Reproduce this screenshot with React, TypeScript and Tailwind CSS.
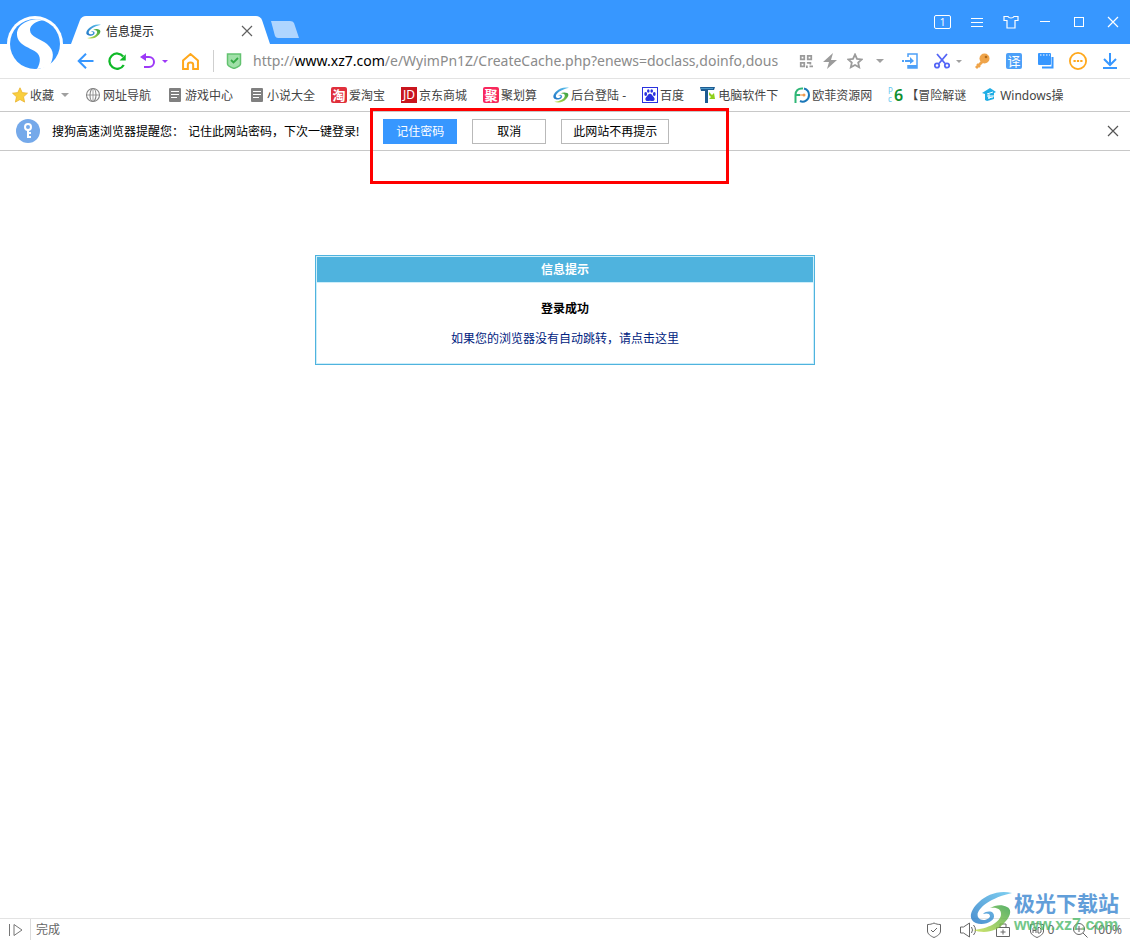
import type { ReactNode, SVGProps } from 'react'

function Svg({ children, ...rest }: SVGProps<SVGSVGElement>) {
  return (
    <svg width="16" height="16" viewBox="0 0 16 16" fill="none" aria-hidden="true" className="shrink-0" {...rest}>
      {children}
    </svg>
  )
}

function Swirl({ size = 16 }: { size?: number }) {
  return (
    <svg width={size} height={size} viewBox="0 0 42 42" aria-hidden="true" className="shrink-0">
      <defs>
        <linearGradient id="swirlBlue" x1="1" y1="0" x2="0" y2="1">
          <stop offset="0" stopColor="#5fc4ee" />
          <stop offset="1" stopColor="#1f74c4" />
        </linearGradient>
        <linearGradient id="swirlGreen" x1="1" y1="0" x2="0" y2="1">
          <stop offset="0" stopColor="#2e9e44" />
          <stop offset="1" stopColor="#c9e04a" />
        </linearGradient>
      </defs>
      <path
        fill="url(#swirlBlue)"
        d="M42 2C28-1 17 4 9 11 2 17-1 25 2 29c3 5 14 5 19 1 3-2 4-5 2-8-2-2-7-2-10 1 3-1 7-1 7 2 0 4-10 6-12 1C5 19 19 7 42 2Z"
      />
      <path
        fill="url(#swirlGreen)"
        d="M3 39c11 4 24 2 32-8 6-6 7-13 2-15-5-3-12-2-17 1 7-1 11 1 11 6 0 8-13 15-28 16Z"
      />
    </svg>
  )
}

function SogouLogo() {
  return (
    <svg width="56" height="56" viewBox="0 0 56 56" aria-hidden="true">
      <circle cx="28" cy="28" r="28" fill="#fff" />
      <circle cx="28" cy="28" r="25" fill="#3797ff" />
      <path
        fill="#fff"
        d="M37 4C24 1 10 8 10 18c0 11 12 13 19 18 5 4 5 10 1 17l12-2c5-9 6-16-2-23-6-5-17-7-17-14 0-5 6-9 14-10Z"
      />
    </svg>
  )
}

const CloseIcon = ({ color = '#fff' }: { color?: string }) => (
  <Svg stroke={color} strokeWidth="1.2">
    <path d="m3 3 10 10M13 3 3 13" />
  </Svg>
)

const Caret = ({ color = '#a0a0a0' }: { color?: string }) => (
  <svg width="8" height="4" viewBox="0 0 8 4" aria-hidden="true" className="shrink-0">
    <path d="M0 0h8L4 4Z" fill={color} />
  </svg>
)

const SmallCaret = ({ color }: { color: string }) => (
  <svg width="6" height="3" viewBox="0 0 6 3" aria-hidden="true" className="shrink-0">
    <path d="M0 0h6L3 3Z" fill={color} />
  </svg>
)

const icons: Record<string, ReactNode> = {
  star: (
    <Svg>
      <path d="m8 .8 2.2 4.8 5.3.6-4 3.6 1.1 5.3L8 12.5l-4.6 2.6 1.1-5.3-4-3.6 5.3-.6Z" fill="#f9cf3e" stroke="#eab22f" strokeWidth=".8" />
    </Svg>
  ),
  globe: (
    <Svg stroke="#858585" strokeWidth="1.1">
      <circle cx="8" cy="8" r="6.5" />
      <ellipse cx="8" cy="8" rx="3" ry="6.5" />
      <path d="M8 1.5v13M1.5 8h13" strokeWidth=".8" />
    </Svg>
  ),
  doc: (
    <Svg>
      <rect x="2" y="1" width="12" height="14" rx="1" fill="#808080" />
      <path d="M4 4.5h8M4 7.5h8M4 10.5h6" stroke="#fff" />
    </Svg>
  ),
  tao: <span className="flex size-4 shrink-0 items-center justify-center rounded-xs bg-[#e0303c] text-[13px] leading-4 font-bold text-white">淘</span>,
  jd: <span className="flex size-4 shrink-0 items-center justify-center bg-[#c9151e] text-[12px] leading-4 text-white">JD</span>,
  ju: <span className="flex size-4 shrink-0 items-center justify-center rounded-xs bg-[#f8285c] text-[13px] leading-4 font-bold text-white">聚</span>,
  swirl: <Swirl />,
  baidu: (
    <Svg>
      <rect x=".5" y=".5" width="15" height="15" fill="#fff" stroke="#2a32df" />
      <g fill="#2a32df">
        <ellipse cx="3.7" cy="7" rx="1.4" ry="1.9" />
        <ellipse cx="6.3" cy="4" rx="1.3" ry="1.8" />
        <ellipse cx="9.7" cy="4" rx="1.3" ry="1.8" />
        <ellipse cx="12.3" cy="7" rx="1.4" ry="1.9" />
        <path d="M8 6.8c2 0 2.3 2 3.7 3.2 1.8 1.8.8 4-1.2 4-1 0-1.500-.3-2.500-.3s-1.500.3-2.500.3c-2 0-3-2.200-1.200-4C5.700 8.800 6 6.800 8 6.800Z" />
      </g>
    </Svg>
  ),
  soft: (
    <Svg>
      <path d="M0 0h15l-1 3H8v13H5V4H1Z" fill="#1d5c92" />
      <path d="M1 1h12v1H1z" fill="#4a9aca" />
      <path d="m9 5 3 3 2-2 1 6H9l2-2-2-2Z" fill="#8fd01c" />
    </Svg>
  ),
  oufei: (
    <Svg strokeWidth="2">
      <path d="M9 1.5C4 1 1.500 4 1.500 8v8M2 8h4" stroke="#30b777" />
      <path d="M10 1.500c3 .8 5 3.500 5 6.500 0 5-5 8-9 6" stroke="#1976b8" />
      <path d="M6 8h4" stroke="#f19a4e" strokeWidth="1.2" />
      <circle cx="10" cy="8" r="1.500" fill="#f19a4e" />
    </Svg>
  ),
  pc6: (
    <Svg>
      <text x="0" y="7" fontSize="8" fill="#68c8ef">P</text>
      <text x="0" y="15" fontSize="8" fill="#68c8ef">c</text>
      <text x="6" y="14" fontSize="16" fontWeight="600" fill="#108f30">6</text>
    </Svg>
  ),
  win: (
    <Svg>
      <path d="M0 6 8 1l6 4-2 1v6l-7 2-2-1V7Z" fill="#20aee5" />
      <path d="m5 7 6-2M5 9h7M6 11l5-1M7 7v5" stroke="#fff" />
    </Svg>
  ),
}

const bookmarks = [
  { icon: 'globe', label: '网址导航' },
  { icon: 'doc', label: '游戏中心' },
  { icon: 'doc', label: '小说大全' },
  { icon: 'tao', label: '爱淘宝' },
  { icon: 'jd', label: '京东商城' },
  { icon: 'ju', label: '聚划算' },
  { icon: 'swirl', label: '后台登陆 -' },
  { icon: 'baidu', label: '百度' },
  { icon: 'soft', label: '电脑软件下' },
  { icon: 'oufei', label: '欧菲资源网' },
  { icon: 'pc6', label: '【冒险解谜' },
  { icon: 'win', label: 'Windows操' },
]

function TitleBar() {
  return (
    <header className="flex h-11 items-end bg-[#3797ff] pl-[71px]">
      <div className="relative flex h-7 w-[199px] items-center px-[15px] pt-0.5">
        <svg viewBox="0 0 199 28" preserveAspectRatio="none" aria-hidden="true" className="absolute inset-0 size-full">
          <path d="M0 28 9 4q2-4 6-4h170q4 0 6 4l8 24Z" fill="#fff" />
        </svg>
        <div className="relative flex w-full items-center">
          <Swirl size={15} />
          <span className="ml-[5px] flex-1 pt-0.5 text-xs text-[#222]">信息提示</span>
          <button aria-label="关闭标签页"><CloseIcon color="#606060" /></button>
        </div>
      </div>
      <button aria-label="新标签页" className="mb-[5px] h-[18px]">
        <svg width="30" height="18" viewBox="0 0 30 18" aria-hidden="true">
          <path d="M1 0h19q3 0 4 2l5 15H8q-2 0-3-2Z" fill="#afd5ff" />
        </svg>
      </button>
      <div className="mr-[9px] ml-auto flex h-11 items-center gap-[18px] text-white">
        <button aria-label="标签数" className="h-[14px] w-[17px] rounded-xs border border-white text-[10px] leading-3">1</button>
        <button aria-label="菜单"><Svg stroke="#fff"><path d="M2 4.5h12M2 8.5h12M2 12.5h12" /></Svg></button>
        <button aria-label="皮肤">
          <Svg stroke="#fff" strokeWidth="1.2">
            <path d="M1 2.5h4c1 2 5 2 6 0h4v4h-3V14H4V6.5H1Z" />
          </Svg>
        </button>
        <button aria-label="最小化"><Svg stroke="#fff"><path d="M3 7.5h10" /></Svg></button>
        <button aria-label="最大化"><Svg stroke="#fff"><rect x="3.5" y="3.5" width="9" height="9" /></Svg></button>
        <button aria-label="关闭"><CloseIcon /></button>
      </div>
    </header>
  )
}

function Toolbar() {
  return (
    <div className="flex h-[35px] items-center border-b border-[#e3e3e3] pr-3 pl-[77px]">
      <div className="flex items-center gap-[14px]">
        <button aria-label="后退">
          <Svg width="17" stroke="#3797ff" strokeWidth="2"><path d="M16 8H1M8.5.8 1.2 8l7.3 7.2" /></Svg>
        </button>
        <button aria-label="刷新">
          <Svg width="18" height="18" stroke="#0fb927" strokeWidth="2">
            <path d="M14 11.5A6.8 6.8 0 1 1 13.5 4" />
            <path d="M15.8 2v5.5h-5.5Z" fill="#0fb927" stroke="none" />
          </Svg>
        </button>
        <button aria-label="撤销" className="flex items-center gap-1.5">
          <Svg stroke="#9d39f7" strokeWidth="2">
            <path d="M3 4h6a5 5 0 0 1 0 10H4" />
            <path d="M0 4 6 0v8Z" fill="#9d39f7" stroke="none" />
          </Svg>
          <SmallCaret color="#9d39f7" />
        </button>
        <button aria-label="主页">
          <Svg width="17" height="17" stroke="#ffa81c" strokeWidth="1.9"><path d="M1 15V7l7-6 7 6v8h-4.500v-4q0-2-2.500-2t-2.500 2v4Z" /></Svg>
        </button>
      </div>
      <span className="ml-3.5 h-[22px] w-px bg-[#cfcfcf]" />
      <Svg className="ml-3 shrink-0">
        <path d="M1.500 1h13v10c0 2-2.500 3-6.500 4.500-4-1.500-6.500-2.500-6.500-4.500Z" fill="#a0e0a8" stroke="#63c270" strokeWidth="1.5" />
        <path d="m5 7 2.500 2.500L12 5" stroke="#35aa45" strokeWidth="1.8" />
      </Svg>
      <div className="ml-[11px] min-w-0 flex-1 overflow-hidden text-sm leading-5 whitespace-nowrap text-[#8b8b8b]">
        http://<span className="text-black">www.xz7.com</span>/e/WyimPn1Z/CreateCache.php?enews=doclass,doinfo,dous
      </div>
      <div className="ml-[7px] flex items-center gap-[9px] text-[#9b9b9b]">
        <button aria-label="二维码">
          <Svg width="14" height="14" stroke="currentColor" strokeWidth="2">
            <path d="M2 2h4v4H2zM10 2h4v4h-4zM2 10h4v4H2z" />
            <path d="M9 10h3M13 9v3M9 13v3M12 14h4" />
          </Svg>
        </button>
        <button aria-label="极速模式"><Svg fill="currentColor"><path d="m11 0-10 9h6l-2 7L15 7H9Z" /></Svg></button>
        <button aria-label="收藏"><Svg stroke="currentColor" strokeWidth="1.8"><path d="m8 1.500 2 4.300 4.700.6-3.500 3.200 1 4.700L8 12l-4.200 2.300 1-4.700L1.300 6.400 6 5.800Z" /></Svg></button>
        <button aria-label="地址列表" className="ml-1"><Caret /></button>
      </div>
      <div className="ml-[18px] flex items-center gap-4">
        <button aria-label="侧边栏">
          <Svg stroke="#4da0f8" strokeWidth="1.5">
            <path d="M6 4V1h9v14H6v-3" />
            <path d="M6 13.500h9" strokeWidth="3" />
            <path d="M0 8h2M3 8h7" strokeWidth="2" />
            <path d="m8 4 4 4-4 3Z" fill="#4da0f8" stroke="none" />
          </Svg>
        </button>
        <button aria-label="截图" className="-mr-1 flex items-center gap-1.5">
          <Svg stroke="#5465f6" strokeWidth="1.8">
            <circle cx="3" cy="12.500" r="2.200" />
            <circle cx="13" cy="12.500" r="2.200" />
            <path d="m3 1 8 9.500M13 1 5 10.500" />
          </Svg>
          <SmallCaret color="#a0a0a0" />
        </button>
        <button aria-label="密码管理">
          <Svg>
            <path d="m9 8-7 7" stroke="#efa44a" strokeWidth="2.800" />
            <path d="m3 11 3 3" stroke="#efa44a" strokeWidth="2" />
            <circle cx="10.500" cy="5.500" r="5" fill="#efa44a" />
            <circle cx="12" cy="4" r="1.300" fill="#b06a18" />
          </Svg>
        </button>
        <button aria-label="翻译" className="size-4 rounded-xs bg-[#4da0f8] text-[13px] leading-4 text-white">译</button>
        <button aria-label="多窗口">
          <Svg>
            <path d="M4 14.500h10.500V4" stroke="#3797ff" strokeWidth="2" />
            <rect width="13" height="12" rx="1" fill="#3797ff" />
            <path d="M2 2h10" stroke="#fff" strokeDasharray="1.5 1.5" />
          </Svg>
        </button>
        <button aria-label="更多" className="-mx-px">
          <Svg width="18" height="18" stroke="#ffa81c" strokeWidth="1.6">
            <circle cx="8" cy="8" r="7.200" />
            <path d="M4 8h2M7 8h2M10 8h2" />
          </Svg>
        </button>
        <button aria-label="下载"><Svg stroke="#3797ff" strokeWidth="2"><path d="M8 0v12M2 6l6 6 6-6M1 15h14" /></Svg></button>
      </div>
    </div>
  )
}

function BookmarkBar() {
  return (
    <nav className="flex h-[33px] items-center gap-4 overflow-hidden border-b border-[#c8c8c8] px-3 text-xs whitespace-nowrap text-[#444]">
      <button className="flex items-center gap-0.5">
        {icons.star}
        <span className="pt-0.5">收藏</span>
        <span className="ml-[5px]"><Caret /></span>
      </button>
      {bookmarks.map((b) => (
        <a key={b.label} href="#" className="flex items-center gap-0.5">
          {icons[b.icon]}
          <span className="pt-0.5">{b.label}</span>
        </a>
      ))}
    </nav>
  )
}

function PasswordNotice() {
  return (
    <div className="flex h-[39px] items-center border-b border-[#c8c8c8] pr-[9px] pl-4 text-xs text-black">
      <svg width="24" height="24" viewBox="0 0 24 24" fill="none" aria-hidden="true">
        <circle cx="12" cy="12" r="12" fill="#75a9ea" />
        <circle cx="12" cy="8" r="3" stroke="#fff" strokeWidth="2" />
        <path d="M12 11v8M12 14h3M12 18h3" stroke="#fff" strokeWidth="2" />
      </svg>
      <p className="ml-3 flex gap-1 pt-0.5 whitespace-nowrap">
        <span>搜狗高速浏览器提醒您：</span>
        <span>记住此网站密码，下次一键登录!</span>
      </p>
      <div className="relative ml-6 flex gap-[15px]">
        <button className="h-[25px] w-[74px] bg-[#3797ff] pt-0.5 text-white">记住密码</button>
        <button className="h-[25px] w-[74px] border border-[#b9b9b9] pt-0.5">取消</button>
        <button className="h-[25px] w-[108px] border border-[#b9b9b9] pt-0.5">此网站不再提示</button>
        <div className="pointer-events-none absolute -top-[11px] -right-[60px] -left-[13px] h-[76px] border-3 border-[#f00]" />
      </div>
      <button aria-label="关闭提示" className="ml-auto"><CloseIcon color="#555" /></button>
    </div>
  )
}

function MessageBox() {
  return (
    <section className="mx-auto w-[500px] border border-[#4fb3de] text-center text-xs">
      <div className="border border-[#cdeefa]">
        <h1 className="h-[26px] border-b border-[#cdeefa] bg-[#4fb3de] leading-[25px] font-bold text-white">信息提示</h1>
        <div className="flex flex-col gap-[14px] pt-[18px] pb-4 leading-4">
          <p className="font-bold text-black">登录成功</p>
          <a href="#" className="text-[#002280]">如果您的浏览器没有自动跳转，请点击这里</a>
        </div>
      </div>
    </section>
  )
}

function StatusBar() {
  return (
    <footer className="relative flex h-[22px] items-center border-t border-[#e3e3e3] px-2 text-xs text-[#666]">
      <button aria-label="展开侧栏"><Svg stroke="#777"><path d="M1.500 2v12M6 2.500v11L14 8Z" /></Svg></button>
      <span className="ml-1.5 h-full w-px bg-[#dcdcdc]" />
      <span className="ml-[5px]">完成</span>
      <div className="ml-auto flex items-center gap-[18px]">
        <button aria-label="安全">
          <Svg stroke="#666">
            <path d="M8 1c2 1 4 1.500 6.500 1.500V9c0 3-3 5-6.500 6.500C4.500 14 1.500 12 1.500 9V2.500C4 2.500 6 2 8 1Z" />
            <path d="m5 8 2 2 4-4" />
          </Svg>
        </button>
        <button aria-label="声音"><Svg width="17" stroke="#666"><path d="M0 5h3l6-4v14l-6-4H0ZM11 5q2 3 0 6M13 3q4 5 0 10" /></Svg></button>
        <button aria-label="隐私"><Svg stroke="#666"><path d="M1.500 5.500h13v9h-13zM5 5V2h6v3M8 7.500v5M5.500 10h5" /></Svg></button>
        <button aria-label="广告拦截" className="flex items-center gap-[3px]">
          <Svg stroke="#666">
            <path d="M8 1c2 1 4 1.500 6.500 1.500V9c0 3-3 5-6.500 6.500C4.500 14 1.500 12 1.500 9V2.500C4 2.500 6 2 8 1Z" />
            <path d="M4 11V6.500L5.500 5 7 6.500V11M4 8.500h3M9 5.500h1.500L12 7v3l-1.500 1H9Z" />
          </Svg>
          0
        </button>
        <button aria-label="缩放" className="flex items-center gap-[3px]">
          <Svg stroke="#666"><circle cx="7" cy="7" r="5.500" /><path d="m11 11 4.500 4.500M7 4v6M4 7h6" /></Svg>
          100%
        </button>
      </div>
      <div className="pointer-events-none absolute right-[11px] bottom-[7px] flex items-center gap-0.5 opacity-80">
        <Swirl size={42} />
        <div className="flex flex-col gap-0.5 whitespace-nowrap">
          <span className="text-[21px] leading-6 font-bold text-[#3a86d0]">极光下载站</span>
          <span className="font-['Liberation_Sans'] text-base leading-4 font-bold text-[#4fba6b]">www.xz7.com</span>
        </div>
      </div>
    </footer>
  )
}

export default function App() {
  return (
    <div className="relative flex min-h-screen flex-col bg-white font-['Noto_Sans','Noto_Sans_CJK_SC',sans-serif]">
      <TitleBar />
      <Toolbar />
      <BookmarkBar />
      <PasswordNotice />
      <main className="flex-1 pt-[104px]">
        <MessageBox />
      </main>
      <StatusBar />
      <div className="absolute top-4 left-[7px]">
        <SogouLogo />
      </div>
    </div>
  )
}
